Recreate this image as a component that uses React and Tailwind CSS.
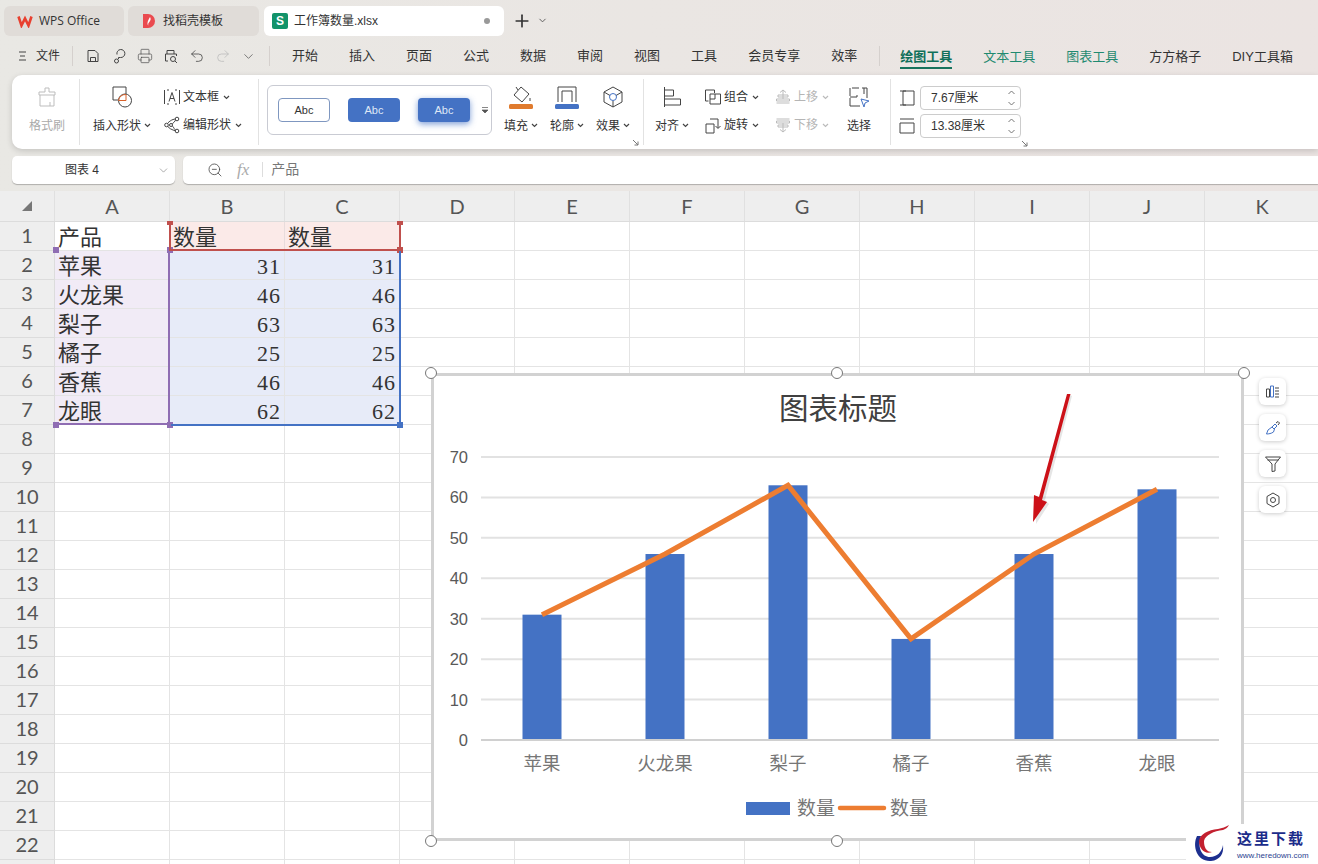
import { ChevronDown, Plus, Undo2, Redo2, Printer, ZoomOut } from 'lucide-react'

const COLS = ['A', 'B', 'C', 'D', 'E', 'F', 'G', 'H', 'I', 'J', 'K']
const MENU = ['开始', '插入', '页面', '公式', '数据', '审阅', '视图', '工具', '会员专享', '效率']
const TOOLS = [
  { name: '绘图工具', cls: 'text-[#10705a] font-semibold border-[#17735c]' },
  { name: '文本工具', cls: 'text-[#1f8a70] border-transparent' },
  { name: '图表工具', cls: 'text-[#1f8a70] border-transparent' },
  { name: '方方格子', cls: 'text-[#333] border-transparent' },
  { name: 'DIY工具箱', cls: 'text-[#333] border-transparent' },
]
const ROWS = [
  ['产品', '数量', '数量'],
  ['苹果', 31, 31],
  ['火龙果', 46, 46],
  ['梨子', 63, 63],
  ['橘子', 25, 25],
  ['香蕉', 46, 46],
  ['龙眼', 62, 62],
]
const CATS = ['苹果', '火龙果', '梨子', '橘子', '香蕉', '龙眼']
const VALUES = [31, 46, 63, 25, 46, 62]
const TICKS = [0, 10, 20, 30, 40, 50, 60, 70]
const catX = (i) => 542 + i * 123
const valY = (v) => 740 - v * 4.043

const Caret = ({ gray }) => (
  <svg width="7" height="5" viewBox="0 0 7 5" className="shrink-0">
    <path d="M1 1l2.5 2.5L6 1" fill="none" stroke={gray ? '#bbb' : '#444'} strokeWidth="1.2" />
  </svg>
)

const Ico = ({ size = 24, children, stroke = '#444', className }) => (
  <svg width={size} height={size} viewBox={`0 0 ${size} ${size}`} fill="none" stroke={stroke} strokeWidth="1" className={className}>
    {children}
  </svg>
)

const Corner = ({ className }) => (
  <svg width="7" height="7" viewBox="0 0 7 7" className={className}>
    <path d="M1 1l5 5M6 2.5V6H2.5" fill="none" stroke="#777" strokeWidth="1" />
  </svg>
)

const Sep = () => <div className="w-px my-[4px] bg-[#e2e2e2] shrink-0" />

const BigTool = ({ width, icon, label, gray, caret = true }) => (
  <div className="flex flex-col items-center shrink-0 gap-[4px]" style={{ width }}>
    <div className="h-[24px] flex items-center justify-center">{icon}</div>
    <div className={`h-[24px] pt-[1px] flex items-center gap-[3px] text-[12px] ${gray ? 'text-[#aaa]' : 'text-[#333]'}`}>
      {label}
      {caret && <Caret />}
    </div>
  </div>
)

const SmallTool = ({ icon, label, gray }) => (
  <div className={`h-[24px] flex items-center text-[12px] ${gray ? 'text-[#b5b5b5]' : 'text-[#333]'}`}>
    <div className="w-[21px] flex justify-center -ml-[1px] mr-[1px]">{icon}</div>
    <span className="mr-[4px]">{label}</span>
    <Caret gray={gray} />
  </div>
)

const SpinInput = ({ value }) => (
  <div className="w-[101px] h-[24px] border border-[#ccc] rounded-[4px] flex items-center justify-between pl-[10px] pr-[4px] text-[12px] text-[#333]">
    {value}
    <svg width="9" height="18" viewBox="0 0 9 18">
      <path d="M1.5 5L4.5 2l3 3M1.5 13l3 3 3-3" fill="none" stroke="#777" strokeWidth="1" />
    </svg>
  </div>
)

const StyleChip = ({ className }) => (
  <div className={`w-[52px] h-[24px] rounded-[4px] flex items-center justify-center text-[11px] ${className}`}>Abc</div>
)

const Handle = ({ className }) => (
  <div className={`absolute w-[12px] h-[12px] rounded-full bg-white border border-[#777] ${className}`} />
)

const SideButton = ({ children }) => (
  <div className="w-[27px] h-[27px] rounded-[6px] bg-white shadow-[0_1px_4px_rgba(0,0,0,0.2)] flex items-center justify-center">
    {children}
  </div>
)

function TabBar() {
  return (
    <div className="h-[40px] flex items-start pt-[6px] pl-[4px]">
      <div className="w-[120px] h-[30px] rounded-[6px] bg-[#e0dcd8] flex items-center pl-[13px] gap-[6px] text-[12px] text-[#333]">
        <svg width="16" height="13" viewBox="0 0 16 13">
          <path d="M1.5 1.5l3 9 3.5-7 3.5 7 3-9" fill="none" stroke="#e8402f" strokeWidth="2.6" strokeLinejoin="miter" />
        </svg>
        <span className="font-['Open_Sans','Noto_Sans_CJK_SC',sans-serif]">WPS Office</span>
      </div>
      <div className="w-[131px] h-[30px] ml-[4px] rounded-[6px] bg-[#e0dcd8] flex items-center pl-[14px] gap-[7px] text-[12px] text-[#333]">
        <svg width="14" height="16" viewBox="0 0 14 16">
          <path d="M1 1h5a7 7 0 0 1 0 14H1z" fill="#ea4a4f" />
          <path d="M8 4c1 2 1 3-1 5.500-1 1-1 2-.5 3C5 11.500 5 9 8 4z" fill="#fff" />
        </svg>
        找稻壳模板
      </div>
      <div className="w-[240px] h-[30px] ml-[5px] rounded-[6px] bg-white flex items-center pl-[8px] text-[12px] text-[#333]">
        <div className="w-[16px] h-[16px] rounded-[2px] bg-[#12936a] text-white text-[12px] font-bold flex items-center justify-center font-['Liberation_Sans',sans-serif]">S</div>
        <span className="ml-[6px] flex-1">工作簿数量.xlsx</span>
        <div className="w-[6px] h-[6px] rounded-full bg-[#999] mr-[14px]" />
      </div>
      <Plus size={20} strokeWidth={2} className="ml-[8px] mt-[5px] text-[#333]" />
      <ChevronDown size={11} className="ml-[5px] mt-[9px] text-[#555]" />
    </div>
  )
}

function MenuBar() {
  return (
    <div className="h-[35px] pb-[3px] flex items-center text-[13px] text-[#333]">
      <div className="ml-[19px] w-[53px] flex items-center gap-[9px] text-[12px] whitespace-nowrap">
        <svg width="8" height="10" viewBox="0 0 8 10">
          <path d="M0 1h7M1 5h5M0 9h7" stroke="#444" strokeWidth="1" />
        </svg>
        文件
      </div>
      <div className="w-px h-[20px] bg-[#d5d0cd]" />
      <div className="flex items-center ml-[12px] gap-[10px]">
        <Ico size={16}>
          <path d="M3 2.500h7l3 3v8H3zM5.500 13.500v-4h5v4" />
        </Ico>
        <Ico size={16}>
          <path d="M6 6.500a4 4 0 1 1 3.500 3H7.500v1.500M7.500 13a2 2 0 1 1-4 0 2 2 0 0 1 4 0" />
        </Ico>
        <Printer size={16} strokeWidth={1} className="text-[#444]" />
        <Ico size={16}>
          <path d="M4 6V2.500h7V6M2.500 13V6h11v2M5 13H2.500" />
          <circle cx="10" cy="11" r="2.500" />
          <path d="M12 13l2 2" />
        </Ico>
        <Undo2 size={16} strokeWidth={1.2} className="text-[#444]" />
        <Redo2 size={16} strokeWidth={1.2} className="text-[#bbb]" />
        <ChevronDown size={15} strokeWidth={1.2} className="text-[#555]" />
      </div>
      <div className="w-px h-[20px] bg-[#d5d0cd] ml-[13px]" />
      <div className="flex items-center gap-[31px] ml-[22px]">
        {MENU.map((m) => (
          <span key={m}>{m}</span>
        ))}
      </div>
      <div className="w-px h-[20px] bg-[#d5d0cd] ml-[22px]" />
      <div className="flex items-center gap-[31px] ml-[20px]">
        {TOOLS.map((t) => (
          <span key={t.name} className={`h-[25px] pt-[3px] border-b-[2px] ${t.cls}`}>{t.name}</span>
        ))}
      </div>
    </div>
  )
}

function Ribbon() {
  return (
    <div className="h-[74px] ml-[12px] rounded-l-[10px] bg-white shadow-[0_2px_6px_rgba(0,0,0,0.16)] flex relative">
      {/* 格式刷 */}
      <div className="w-[67px] pt-[10px] pl-[3px] shrink-0 flex justify-center">
        <BigTool
          width={60}
          gray
          caret={false}
          label="格式刷"
          icon={
            <Ico size={24} stroke="#bdbdbd">
              <path d="M10 3h4v4h6v3H4V7h6zM5 10v11h14V10M15 21v-4" />
            </Ico>
          }
        />
      </div>
      <Sep />
      {/* 形状 */}
      <div className="w-[178px] pt-[10px] pl-[11px] shrink-0 flex">
        <BigTool
          width={62}
          label="插入形状"
          icon={
            <Ico size={24}>
              <path d="M3 2h13v7M3 2v13h5" />
              <circle cx="15" cy="15.500" r="6.500" />
              <path d="M16 9.500v6H8.500a7 6.500 0 0 1 7.500-6" stroke="#d9622b" />
            </Ico>
          }
        />
        <div className="flex flex-col gap-[4px] ml-[9px]">
          <SmallTool
            label="文本框"
            icon={
              <Ico size={18}>
                <path d="M1.500 2v14M16.500 2v14M4 2h2M12 2h2M4 16h2M12 16h2" />
                <path d="M6 13.500L9 4.500l3 9M7 10.500h4" />
              </Ico>
            }
          />
          <SmallTool
            label="编辑形状"
            icon={
              <Ico size={18}>
                <path d="M13 3C9 3 5 6 3.500 9c2 3 5 5 10 6-2-2-3-3-3-4-1-1-2-1.500-2.500-2 2-2 4-3 5-6" />
                <circle cx="14" cy="3" r="1.800" fill="#fff" />
                <circle cx="3.500" cy="9" r="1.800" fill="#fff" />
                <circle cx="14" cy="15" r="1.800" fill="#fff" />
                <circle cx="8" cy="9" r="1.500" fill="#fff" />
              </Ico>
            }
          />
        </div>
      </div>
      <Sep />
      {/* 样式 */}
      <div className="w-[384px] pt-[10px] pl-[8px] shrink-0 flex relative">
        <div className="w-[225px] h-[50px] border border-[#c9cbd3] rounded-[6px] flex items-center pl-[10px] gap-[18px] relative">
          <StyleChip className="bg-white border-[1.500px] border-[#7f97c0] text-[#333]" />
          <StyleChip className="bg-[#4472c4] text-[#dfe7f6]" />
          <StyleChip className="bg-[#4472c4] text-[#dfe7f6] shadow-[0_2px_6px_rgba(68,114,196,0.7)]" />
          <svg width="8" height="8" viewBox="0 0 8 8" className="absolute right-[2px] top-[20px]">
            <path d="M1 1.500h6M1 4h6l-3 3z" fill="#555" stroke="#555" strokeWidth="0.700" />
          </svg>
        </div>
        <div className="flex ml-[6px]">
          <BigTool
            width={46}
            label="填充"
            icon={
              <Ico size={26}>
                <path d="M13 3l8 7-7 8-8-7zM10 6L8 3M22 14v3" />
                <rect x="1" y="20" width="24" height="5" rx="1.500" fill="#e07b2e" stroke="none" />
              </Ico>
            }
          />
          <BigTool
            width={46}
            label="轮廓"
            icon={
              <Ico size={26}>
                <path d="M4 18V3h18v15M8 18V7h10v11" />
                <rect x="1" y="20" width="24" height="5" rx="1.500" fill="#4472c4" stroke="none" />
              </Ico>
            }
          />
          <BigTool
            width={46}
            label="效果"
            icon={
              <Ico size={24}>
                <path d="M12 2l9 5v10l-9 5-9-5V7zM3 7l6 3.500M21 7l-6 3.500M12 16v6" />
                <circle cx="12" cy="12" r="3.500" stroke="#4472c4" />
              </Ico>
            }
          />
        </div>
        <Corner className="absolute right-[4px] bottom-[3px]" />
      </div>
      <Sep />
      {/* 排列 */}
      <div className="w-[246px] pt-[10px] shrink-0 flex">
        <BigTool
          width={56}
          label="对齐"
          icon={
            <Ico size={20}>
              <path d="M2.500 0v20M2.500 3h9v6h-9M2.500 12h16v6h-16" />
            </Ico>
          }
        />
        <div className="flex flex-col gap-[4px] ml-[3px] w-[70px] shrink-0">
          <SmallTool
            label="组合"
            icon={
              <Ico size={18}>
                <path d="M1.500 2h9v3M1.500 2v11h3M6 6h10.500v10H6z" />
                <path d="M11 6v5H6" />
              </Ico>
            }
          />
          <SmallTool
            label="旋转"
            icon={
              <Ico size={18}>
                <path d="M2 8h8v9H2zM6 3h8v9M11.500 10l2.500 2.500 2.500-2.500" />
              </Ico>
            }
          />
        </div>
        <div className="flex flex-col gap-[4px] w-[65px] shrink-0">
          <SmallTool
            gray
            label="上移"
            icon={
              <Ico size={16} stroke="#bbb">
                <path d="M5 3.500L8 1l3 2.500M8 1v9M3 6h10v2H3zM1.500 10h13v2h-13zM1.500 14h13" />
              </Ico>
            }
          />
          <SmallTool
            gray
            label="下移"
            icon={
              <Ico size={16} stroke="#bbb">
                <path d="M5 12.500L8 15l3-2.500M8 15V6M1.500 2h13M1.500 4h13v2h-13zM3 8h10v2H3z" />
              </Ico>
            }
          />
        </div>
        <div className="flex justify-center w-[42px]">
          <BigTool
            width={42}
            caret={false}
            label="选择"
            icon={
              <Ico size={24}>
                <path d="M5 3h7M15 3h5v10M3 3v8M3 13v8h10M3 12h7v-2M17 3v6" />
                <path d="M14 14l8 2-4 2-1 4z" stroke="#4472c4" />
              </Ico>
            }
          />
        </div>
      </div>
      <Sep />
      {/* 尺寸 */}
      <div className="flex-1 pt-[11px] pl-[8px] flex gap-[5px] relative">
        <div className="flex flex-col gap-[12px] pt-[4px]">
          <Ico size={16}>
            <path d="M1 1h6M1 15h6M4 1v14M4 1h11v14H4" />
          </Ico>
          <Ico size={16}>
            <path d="M1 1h14M1 5h14v10H1z" />
          </Ico>
        </div>
        <div className="flex flex-col gap-[4px]">
          <SpinInput value="7.67厘米" />
          <SpinInput value="13.38厘米" />
        </div>
        <Corner className="absolute left-[130px] bottom-[2px]" />
      </div>
    </div>
  )
}

function FormulaBar() {
  return (
    <div className="h-[28px] mt-[7px] flex pl-[12px] gap-[8px] text-[12px]">
      <div className="w-[163px] rounded-[5px] bg-white shadow-[0_1px_1px_rgba(0,0,0,0.25)] flex items-center text-[#333]">
        <span className="ml-[53px]">图表 4</span>
        <ChevronDown size={13} strokeWidth={1} className="ml-[58px] text-[#666]" />
      </div>
      <div className="flex-1 rounded-l-[5px] bg-white shadow-[0_1px_1px_rgba(0,0,0,0.25)] flex items-center pb-[1px]">
        <ZoomOut size={16} strokeWidth={1.2} className="ml-[24px] text-[#444]" />
        <span className="ml-[14px] text-[17px] italic text-[#aaa] font-['Liberation_Serif',serif]">fx</span>
        <div className="w-px h-[15px] bg-[#ddd] ml-[13px]" />
        <span className="ml-[8px] text-[14px] text-[#777]">产品</span>
      </div>
    </div>
  )
}

const cellTint = (r, c) => {
  if (r === 0 && c === 0) return 'bg-white'
  if (r === 0 && c < 3) return 'bg-[#fbeae8] border-[#e8dcdc]'
  if (r < 7 && c === 0) return 'bg-[#f1ebf6] border-[#dcd8e6]'
  if (r < 7 && c < 3) return 'bg-[#e7ebf8] border-[#d3d8ea]'
  return 'bg-white'
}

function Sheet() {
  return (
    <div className="font-['Liberation_Serif','Noto_Sans_CJK_SC',serif]">
      <div className="flex h-[31px] bg-[#eeeeee] border-b border-[#dcdcdc] font-['Lato',sans-serif] text-[20px] text-[#555]">
        <div className="w-[55px] shrink-0 border-r border-[#e0e0e0] flex items-center justify-center">
          <div className="w-0 h-0 border-l-[10px] border-b-[10px] border-l-transparent border-b-[#777] ml-[-1px]" />
        </div>
        {COLS.map((c) => (
          <div key={c} className="w-[115px] shrink-0 border-r border-[#e0e0e0] flex items-center justify-center">{c}</div>
        ))}
      </div>
      {Array.from({ length: 23 }, (_, r) => (
        <div key={r} className="flex h-[29px]">
          <div className="w-[55px] shrink-0 bg-[#eeeeee] border-r border-b border-[#dcdcdc] pb-[2px] font-['Lato',sans-serif] text-[20px] text-[#555] flex items-center justify-center">
            {r < 22 ? r + 1 : ''}
          </div>
          {COLS.map((c, ci) => {
            const val = ROWS[r]?.[ci]
            return (
              <div
                key={c}
                className={`w-[115px] shrink-0 border-r border-b border-[#e4e4e4] flex items-center pt-[3px] text-[22px] leading-none text-[#333] ${cellTint(r, ci)} ${typeof val === 'number' ? 'justify-end pr-[3px] tracking-[1px]' : 'pl-[3px]'}`}
              >
                {val}
              </div>
            )
          })}
        </div>
      ))}
    </div>
  )
}

const Dot = ({ className }) => <div className={`absolute w-[6px] h-[6px] ${className}`} />

function RangeMarks() {
  return (
    <>
      {/* 分类 */}
      <div className="absolute left-[56px] top-[58px] w-[114px] h-[176px] border-b-[2px] border-r-[2px] border-[#8f6db3]" />
      <Dot className="bg-[#8f6db3] left-[53px] top-[56px]" />
      <Dot className="bg-[#8f6db3] left-[167px] top-[56px]" />
      <Dot className="bg-[#8f6db3] left-[53px] top-[231px]" />
      <Dot className="bg-[#8f6db3] left-[167px] top-[231px]" />
      {/* 系列名 */}
      <div className="absolute left-[169px] top-[31px] w-[232px] h-[29px] border-[2px] border-t-0 border-[#c0504d]" />
      <Dot className="bg-[#c0504d] left-[167px] top-[30px] !h-[4px]" />
      <Dot className="bg-[#c0504d] left-[397px] top-[30px] !h-[4px]" />
      <Dot className="bg-[#c0504d] left-[397px] top-[56px]" />
      {/* 数值 */}
      <div className="absolute left-[171px] top-[60px] w-[230px] h-[175px] border-b-[2px] border-r-[2px] border-[#4472c4]" />
      <Dot className="bg-[#4472c4] left-[397px] top-[231px]" />
    </>
  )
}

function Chart() {
  const linePoints = VALUES.map((v, i) => `${catX(i)},${valY(v)}`).join(' ')
  return (
    <div className="absolute left-[431px] top-[182px] w-[813px] h-[468px] border-[3px] border-[#d2d2d2] bg-white">
      <svg viewBox="434 376 807 462" className="block w-full h-full font-['Liberation_Sans','Noto_Sans_CJK_SC',sans-serif]">
        <text x="838" y="419" textAnchor="middle" fontSize="29.500" fill="#404040">图表标题</text>
        {TICKS.map((t) => (
          <g key={t}>
            <line x1="481" x2="1219" y1={valY(t)} y2={valY(t)} stroke={t === 0 ? '#d0d0d0' : '#e2e2e2'} strokeWidth="2" />
            <text x="468" y={valY(t) + 6} textAnchor="end" fontSize="16.500" fill="#595959">{t}</text>
          </g>
        ))}
        {VALUES.map((v, i) => (
          <rect key={i} x={catX(i) - 19.5} y={valY(v)} width="39" height={739 - valY(v)} fill="#4472c4" />
        ))}
        <polyline points={linePoints} fill="none" stroke="#ed7d31" strokeWidth="5" strokeLinejoin="miter" />
        {CATS.map((c, i) => (
          <text key={c} x={catX(i)} y="770" textAnchor="middle" fontSize="18.500" fill="#767676">{c}</text>
        ))}
        <rect x="746" y="802" width="44" height="13" fill="#4472c4" />
        <text x="797" y="815" fontSize="19" fill="#767676">数量</text>
        <line x1="840" x2="884" y1="808" y2="808" stroke="#ed7d31" strokeWidth="4.500" strokeLinecap="round" />
        <text x="890" y="815" fontSize="19" fill="#767676">数量</text>
        {/* 红色箭头 */}
        <polygon points="1072,396 1070,395 1042,499 1036,497 1036,524 1049,504 1045,500" fill="#000" opacity="0.1" />
        <polygon points="1070.500,394 1067,394 1039,497 1034,495 1033,522 1047,502 1042,500" fill="#cc1118" />
      </svg>
      <Handle className="-left-[9px] -top-[9px]" />
      <Handle className="left-[397px] -top-[9px]" />
      <Handle className="-right-[9px] -top-[9px]" />
      <Handle className="-left-[9px] -bottom-[9px]" />
      <Handle className="left-[397px] -bottom-[9px]" />
      <Handle className="-right-[9px] -bottom-[9px]" />
    </div>
  )
}

function ChartButtons() {
  return (
    <div className="absolute left-[1259px] top-[187px] flex flex-col gap-[9px]">
      <SideButton>
        <Ico size={16}>
          <path d="M1.500 5h3v8h-3zM10 4h4M10 7h4M10 10h4M10 13h4" />
          <path d="M5.500 2h3v11h-3z" stroke="#4472c4" />
        </Ico>
      </SideButton>
      <SideButton>
        <Ico size={16} stroke="#4472c4">
          <path d="M10 4l2 2-3 3-2-2zM7 7l-4 3-1.500 4c2 0 5-.5 7-2l1-3" />
          <path d="M11 3l2-1.500 1.500 1.500L13 5" stroke="#444" />
        </Ico>
      </SideButton>
      <SideButton>
        <Ico size={18}>
          <path d="M1.500 2h15L11 9v7l-3 .5V9zM3.500 5h11" />
        </Ico>
      </SideButton>
      <SideButton>
        <Ico size={16}>
          <path d="M8 1l6 3.500v7L8 15l-6-3.500v-7z" />
          <circle cx="8" cy="8" r="2.500" />
        </Ico>
      </SideButton>
    </div>
  )
}

function Watermark() {
  return (
    <div className="absolute right-0 bottom-0 w-[132px] h-[40px] bg-white flex items-start">
      <svg width="44" height="40" viewBox="0 0 44 40" className="shrink-0 ml-[5px]">
        <path d="M6 12C1 22 6 38 20 37c9-1 13-7 12-16-1 7-6 12-13 12C11 33 6 24 10 12z" fill="#1d2f8f" />
        <path d="M8 17c0 8 6 14 13 11-6 0-8-5-8-11 1-6 10-10 19-11 3-1 5-3 6-5-3 2-7 3-11 4C17 6 9 10 8 17z" fill="#c3202f" />
      </svg>
      <div className="ml-[2px] mt-[4px]">
        <div className="text-[15px] leading-[20px] tracking-[2px] font-bold text-[#1b2c8a] font-['Noto_Sans_CJK_SC',sans-serif]">这里下载</div>
        <div className="text-[8px] leading-[10px] mt-[3px] text-[#2c3f8f] font-['Liberation_Sans',sans-serif] whitespace-nowrap">www.heredown.com</div>
      </div>
    </div>
  )
}

export default function App() {
  return (
    <div className="w-[1318px] h-[864px] overflow-hidden bg-gradient-to-r from-[#e9e8e4] to-[#ebe4e2] font-['Liberation_Sans','Noto_Sans_CJK_SC',sans-serif]">
      <TabBar />
      <MenuBar />
      <Ribbon />
      <FormulaBar />
      <div className="relative h-[673px] mt-[7px] overflow-hidden">
        <Sheet />
        <RangeMarks />
        <Chart />
        <ChartButtons />
        <Watermark />
      </div>
    </div>
  )
}
